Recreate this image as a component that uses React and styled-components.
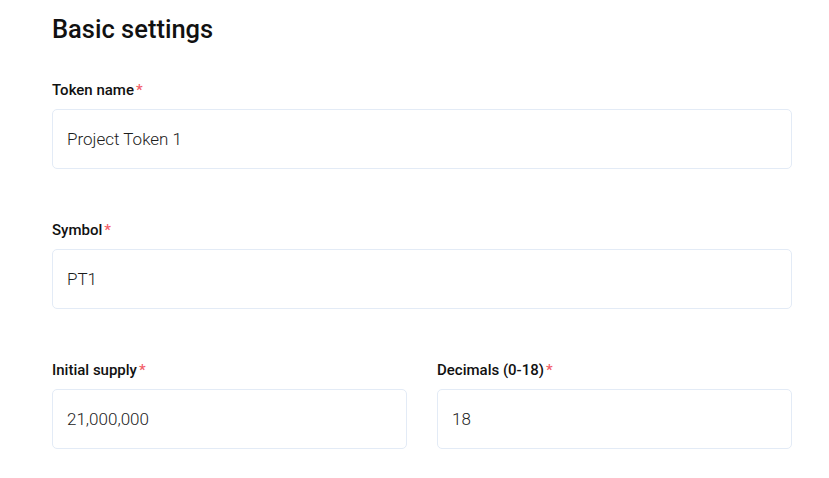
import React from "react";
import styled, { createGlobalStyle } from "styled-components";

const GlobalStyle = createGlobalStyle`
  body {
    margin: 0;
    background: #ffffff;
    font-family: Roboto, "Noto Sans", sans-serif;
    color: #111111;
  }
`;

const Page = styled.div`
  padding: 14px 0 0 52px;
  width: 740px;
`;

const Title = styled.h2`
  margin: 0 0 36px;
  font-size: 25.5px;
  line-height: 30px;
  font-weight: 500;
  color: #111111;
`;

const Row = styled.div`
  display: grid;
  grid-template-columns: ${(p) => (p.cols === 2 ? "1fr 1fr" : "1fr")};
  column-gap: 30px;
  margin-bottom: 51px;
`;

const Field = styled.div`
  display: flex;
  flex-direction: column;
`;

const Label = styled.label`
  font-size: 15px;
  line-height: 20px;
  font-weight: 500;
  color: #111111;
  margin-bottom: 9px;
`;

const Star = styled.span`
  color: #f2606a;
  margin-left: 2px;
`;

const Input = styled.input`
  box-sizing: border-box;
  width: 100%;
  height: 60px;
  padding: 0 14px;
  border: 1px solid #e3ebf6;
  border-radius: 5px;
  background: #ffffff;
  font-family: Roboto, "Noto Sans", sans-serif;
  font-size: 17px;
  font-weight: 300;
  color: #1c1c1c;
  outline: none;
`;

function TextField({ label, value }) {
  return (
    <Field>
      <Label htmlFor={label}>
        {label}
        <Star>*</Star>
      </Label>
      <Input id={label} defaultValue={value} />
    </Field>
  );
}

export default function App() {
  return (
    <>
      <GlobalStyle />
      <Page>
        <Title>Basic settings</Title>
        <Row>
          <TextField label="Token name" value="Project Token 1" />
        </Row>
        <Row>
          <TextField label="Symbol" value="PT1" />
        </Row>
        <Row cols={2}>
          <TextField label="Initial supply" value="21,000,000" />
          <TextField label="Decimals (0-18)" value="18" />
        </Row>
      </Page>
    </>
  );
}
